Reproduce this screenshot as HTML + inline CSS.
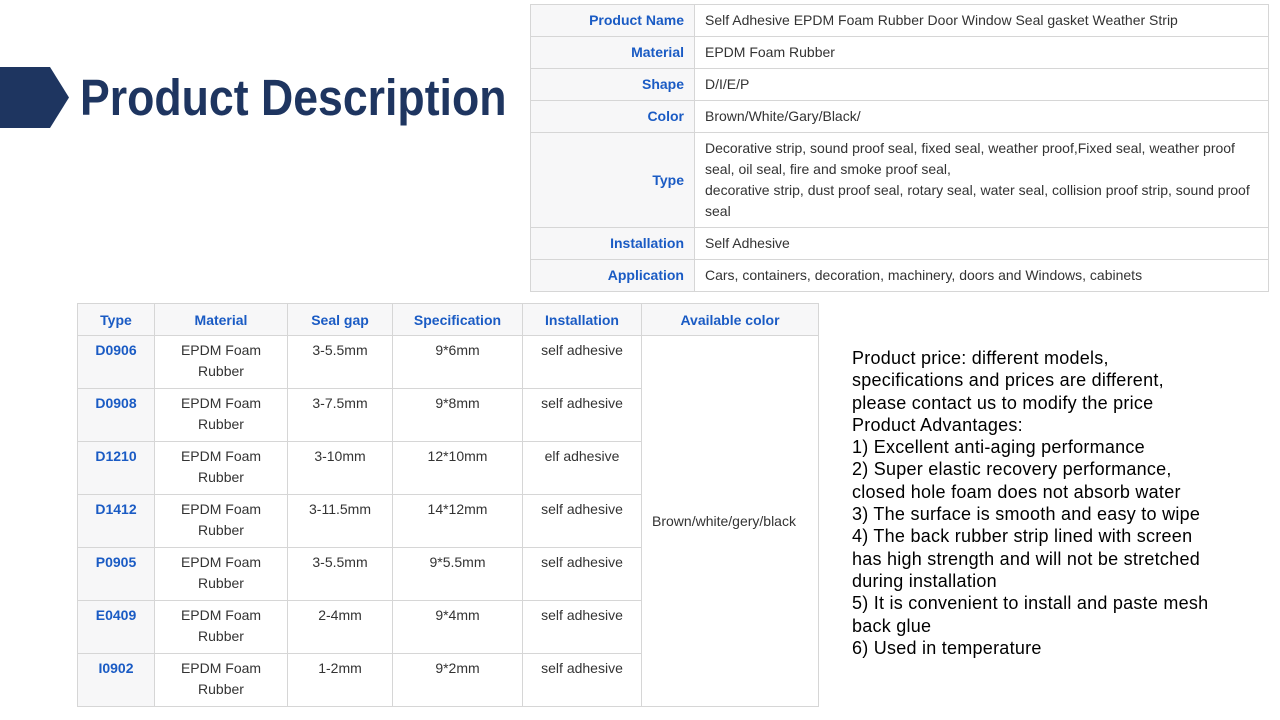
<!DOCTYPE html>
<html><head><meta charset="utf-8"><style>
*{margin:0;padding:0;box-sizing:border-box}
body{width:1280px;height:720px;background:#fff;position:relative;overflow:hidden;font-family:"Liberation Sans",Arial,sans-serif}
.arrow{position:absolute;left:0;top:67px;width:69px;height:61px;background:#1e3560;clip-path:polygon(0 0,50px 0,69px 50%,50px 100%,0 100%)}
.title{position:absolute;left:80px;top:68px;font-size:51px;font-weight:bold;color:#1e3560;white-space:nowrap;transform:scaleX(0.875);transform-origin:left top;line-height:60px}
table{position:absolute;border-collapse:collapse;font-size:14px;color:#333}
td,th{border:1px solid #d6d6d6}
.t1{left:530px;top:4px;width:739px}
.t1 td{padding:0 10px;line-height:21px;height:32px}
.t1 td.l{width:164px;text-align:right;font-weight:bold;color:#1a5bc4;background:#f7f7f8}
.t2{left:77px;top:303px;width:742px;text-align:center}
.t2 th{height:32px;font-weight:bold;color:#1a5bc4;background:#f7f7f8}
.t2 td{height:53px;vertical-align:top;padding-top:4px;line-height:21px}
.t2 td.k{font-weight:bold;color:#1a5bc4;background:#f7f7f8}
.t2 td.c{vertical-align:middle;padding-top:0;padding-right:12px}
.txt{position:absolute;left:852px;top:347px;font-size:18px;letter-spacing:0.25px;line-height:22.3px;color:#000}
</style></head><body>
<div class="arrow"></div>
<div class="title">Product Description</div>
<table class="t1">
<tr><td class="l">Product Name</td><td>Self Adhesive EPDM Foam Rubber Door Window Seal gasket Weather Strip</td></tr>
<tr><td class="l">Material</td><td>EPDM Foam Rubber</td></tr>
<tr><td class="l">Shape</td><td>D/I/E/P</td></tr>
<tr><td class="l">Color</td><td>Brown/White/Gary/Black/</td></tr>
<tr><td class="l" style="height:95px">Type</td><td>Decorative strip, sound proof seal, fixed seal, weather proof,Fixed seal, weather proof seal, oil seal, fire and smoke proof seal,<br>decorative strip, dust proof seal, rotary seal, water seal, collision proof strip, sound proof seal</td></tr>
<tr><td class="l">Installation</td><td>Self Adhesive</td></tr>
<tr><td class="l">Application</td><td>Cars, containers, decoration, machinery, doors and Windows, cabinets</td></tr>
</table>
<table class="t2">
<tr><th style="width:77px">Type</th><th style="width:133px">Material</th><th style="width:105px">Seal gap</th><th style="width:130px">Specification</th><th style="width:119px">Installation</th><th>Available color</th></tr>
<tr><td class="k">D0906</td><td>EPDM Foam<br>Rubber</td><td>3-5.5mm</td><td>9*6mm</td><td>self adhesive</td><td class="c" rowspan="7">Brown/white/gery/black</td></tr>
<tr><td class="k">D0908</td><td>EPDM Foam<br>Rubber</td><td>3-7.5mm</td><td>9*8mm</td><td>self adhesive</td></tr>
<tr><td class="k">D1210</td><td>EPDM Foam<br>Rubber</td><td>3-10mm</td><td>12*10mm</td><td>elf adhesive</td></tr>
<tr><td class="k">D1412</td><td>EPDM Foam<br>Rubber</td><td>3-11.5mm</td><td>14*12mm</td><td>self adhesive</td></tr>
<tr><td class="k">P0905</td><td>EPDM Foam<br>Rubber</td><td>3-5.5mm</td><td>9*5.5mm</td><td>self adhesive</td></tr>
<tr><td class="k">E0409</td><td>EPDM Foam<br>Rubber</td><td>2-4mm</td><td>9*4mm</td><td>self adhesive</td></tr>
<tr><td class="k">I0902</td><td>EPDM Foam<br>Rubber</td><td>1-2mm</td><td>9*2mm</td><td>self adhesive</td></tr>
</table>
<div class="txt">Product price: different models,<br>specifications and prices are different,<br>please contact us to modify the price<br>Product Advantages:<br>1) Excellent anti-aging performance<br>2) Super elastic recovery performance,<br>closed hole foam does not absorb water<br>3) The surface is smooth and easy to wipe<br>4) The back rubber strip lined with screen<br>has high strength and will not be stretched<br>during installation<br>5) It is convenient to install and paste mesh<br>back glue<br>6) Used in temperature</div>
</body></html>
